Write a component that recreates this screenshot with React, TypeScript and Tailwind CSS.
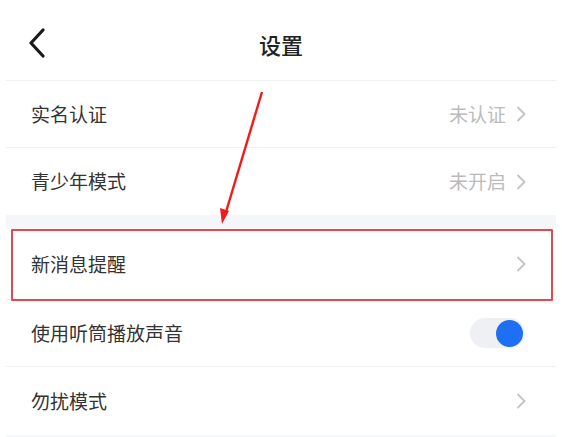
import React from 'react';

type Row = { label: string; value?: string; toggle?: boolean; h: string };

const GROUP_A: Row[] = [
  { label: '实名认证', value: '未认证', h: 'h-[67px]' },
  { label: '青少年模式', value: '未开启', h: 'h-[67px]' },
];

const GROUP_B: Row[] = [
  { label: '新消息提醒', h: 'h-[71px]' },
  { label: '使用听筒播放声音', toggle: true, h: 'h-[67px]' },
  { label: '勿扰模式', h: 'h-[68px]' },
];

function Chevron() {
  return (
    <svg width="12" height="16" viewBox="0 0 12 16" className="ml-[9px]">
      <path d="M3 1.5 L9.5 8 L3 14.5" fill="none" stroke="#c4c4c4" strokeWidth="1.8" strokeLinecap="round" strokeLinejoin="round" />
    </svg>
  );
}

function Toggle() {
  return (
    <div className="w-[55px] h-[30px] rounded-full bg-[#eef0f4] flex items-center justify-end pr-[2px]">
      <div className="w-[27px] h-[27px] rounded-full bg-[#1e6ff1]" />
    </div>
  );
}

function SettingRow({ row, last }: { row: Row; last?: boolean }) {
  return (
    <div className={`flex items-center justify-between pl-[25px] pr-[29px] ${row.h} ${last ? '' : 'border-b border-[#f0f1f3]'}`}>
      <span className="text-[19px] text-[#333]">{row.label}</span>
      {row.toggle ? (
        <div className="mr-[2px]"><Toggle /></div>
      ) : (
        <div className="flex items-center">
          {row.value && <span className="text-[19px] text-[#bbbbbb]">{row.value}</span>}
          <Chevron />
        </div>
      )}
    </div>
  );
}

export default function App() {
  return (
    <div
      className="relative w-[562px] h-[437px] bg-white overflow-hidden"
      style={{ fontFamily: '"Noto Sans CJK SC", "Noto Sans", sans-serif' }}
    >
      <div className="mx-[6px]">
        {/* Header */}
        <div className="relative h-[81px] flex items-center justify-center border-b border-[#f0f1f3] pt-[8px]">
          <svg width="20" height="30" viewBox="0 0 20 30" className="absolute left-[21px] top-[28px]">
            <path d="M16 2 L4 15 L16 28" fill="none" stroke="#1a1a1a" strokeWidth="3.2" strokeLinecap="round" strokeLinejoin="round" />
          </svg>
          <h1 className="text-[22px] font-medium text-[#222]">设置</h1>
        </div>

        {GROUP_A.map((r, i) => (
          <SettingRow key={r.label} row={r} last={i === GROUP_A.length - 1} />
        ))}

        <div className="h-[14px] bg-[#f4f6f9]" />

        {GROUP_B.map((r, i) => (
          <SettingRow key={r.label} row={r} last={i === GROUP_B.length - 1} />
        ))}

        <div className="h-[20px] bg-[#f4f6f9]" />
      </div>

      {/* annotation: red box + arrow */}
      <div className="absolute left-[11px] top-[229px] w-[542px] h-[72px] border-2 border-[#e5484d] rounded-[1px]" />
      <svg className="absolute left-0 top-0" width="562" height="437" viewBox="0 0 562 437">
        <line x1="262" y1="92" x2="226" y2="212" stroke="#f01c1c" strokeWidth="2.4" />
        <polygon points="222,224 220,208 229,211" fill="#f01c1c" />
      </svg>
    </div>
  );
}
